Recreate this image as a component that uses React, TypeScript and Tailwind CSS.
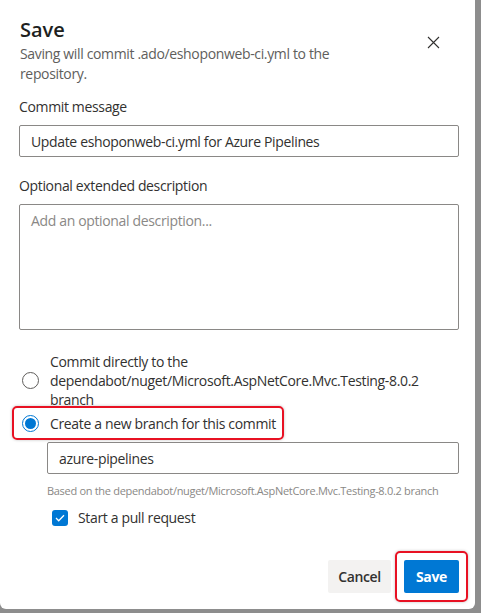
import React from 'react';

export default function App() {
  return (
    <div className="w-[481px] h-[613px] bg-[#8d8d8d] overflow-hidden" style={{ fontFamily: '"Open Sans", "Noto Sans", sans-serif' }}>
      <div className="w-[475px] h-[609px] bg-white rounded-b-[6px] flex flex-col text-[#323130]">
        {/* Header */}
        <div className="flex justify-between pl-5 pr-[34px] pt-[16px]">
          <div>
            <h1 className="text-[20px] leading-[28px] font-semibold text-[#201f1e]">Save</h1>
            <p className="text-[14px] leading-[20px] text-[#605e5c] w-[340px] tracking-[-0.35px]">
              Saving will commit .ado/eshoponweb-ci.yml to the repository.
            </p>
          </div>
          <button className="mt-[18px] w-4 h-4 flex items-center justify-center text-[#323130]">
            <svg width="13" height="13" viewBox="0 0 13 13" fill="none" stroke="currentColor" strokeWidth="1.1">
              <path d="M1 1 L12 12 M12 1 L1 12" />
            </svg>
          </button>
        </div>

        {/* Commit message */}
        <div className="pl-[19px] pr-[16px] mt-[13px]">
          <label className="block text-[14px] leading-[20px] text-[#323130] tracking-[-0.35px]">Commit message</label>
          <div className="mt-[8px] h-[32px] border border-[#8a8886] rounded-[2px] flex items-center px-[11px] text-[14px] text-[#323130] tracking-[-0.35px]">
            Update eshoponweb-ci.yml for Azure Pipelines
          </div>

          <label className="block mt-[19px] text-[14px] leading-[20px] text-[#323130] tracking-[-0.35px]">Optional extended description</label>
          <div className="mt-[8px] h-[126px] border border-[#8a8886] rounded-[2px] px-[11px] pt-[5px] text-[14px] text-[#8a8886] tracking-[-0.35px]">
            Add an optional description...
          </div>
        </div>

        {/* Radio options */}
        <div className="mt-[22px] px-[19px]">
          <div className="flex items-center gap-[11px] ml-[3px]">
            <span className="w-[17px] h-[17px] rounded-full border border-[#605e5c] shrink-0" />
            <span className="text-[14px] leading-[19px] tracking-[-0.35px] w-[385px]">
              Commit directly to the dependabot/nuget/Microsoft.AspNetCore.Mvc.Testing-8.0.2 branch
            </span>
          </div>
          <div className="-mt-[3px] -ml-[7px] w-[272px] h-[34px] border-2 border-[#e81123] rounded-[5px] flex items-center gap-[11px] pl-[8px] shadow-[0_0_3px_rgba(0,0,0,0.25)]">
            <span className="w-[17px] h-[17px] rounded-full border border-[#0078d4] shrink-0 flex items-center justify-center">
              <span className="w-[11px] h-[11px] rounded-full bg-[#0078d4]" />
            </span>
            <span className="text-[14px] leading-[19px] tracking-[-0.35px]">Create a new branch for this commit</span>
          </div>
        </div>

        {/* Branch name */}
        <div className="pl-[47px] pr-[16px] mt-[2px]">
          <div className="h-[32px] border border-[#8a8886] rounded-[2px] flex items-center px-[11px] text-[14px] text-[#323130] tracking-[-0.35px]">
            azure-pipelines
          </div>
          <p className="mt-[10px] text-[11px] leading-[14px] text-[#8a8886] tracking-[-0.3px]">
            Based on the dependabot/nuget/Microsoft.AspNetCore.Mvc.Testing-8.0.2 branch
          </p>
          <div className="mt-[10px] ml-[5px] flex items-center gap-[10px]">
            <span className="w-[16px] h-[16px] rounded-[3px] bg-[#0078d4] flex items-center justify-center">
              <svg width="10" height="8" viewBox="0 0 10 8" fill="none" stroke="white" strokeWidth="1.3">
                <path d="M1 4 L3.7 6.7 L9 1.2" />
              </svg>
            </span>
            <span className="text-[14px] leading-[20px] tracking-[-0.35px]">Start a pull request</span>
          </div>
        </div>

        {/* Footer */}
        <div className="mt-auto mb-[16px] pr-[16px] flex justify-end items-center gap-[13px]">
          <button className="h-[33px] w-[63px] bg-[#f3f2f1] rounded-[2px] text-[14px] font-semibold text-[#323130] tracking-[-0.35px]">
            Cancel
          </button>
          <div className="p-[7px] -m-[9px] border-2 border-[#e81123] rounded-[5px] shadow-[0_0_3px_rgba(0,0,0,0.25)]">
            <button className="h-[33px] w-[55px] bg-[#0078d4] rounded-[2px] text-[14px] font-bold text-white tracking-[-0.35px]">
              Save
            </button>
          </div>
        </div>
      </div>
    </div>
  );
}
